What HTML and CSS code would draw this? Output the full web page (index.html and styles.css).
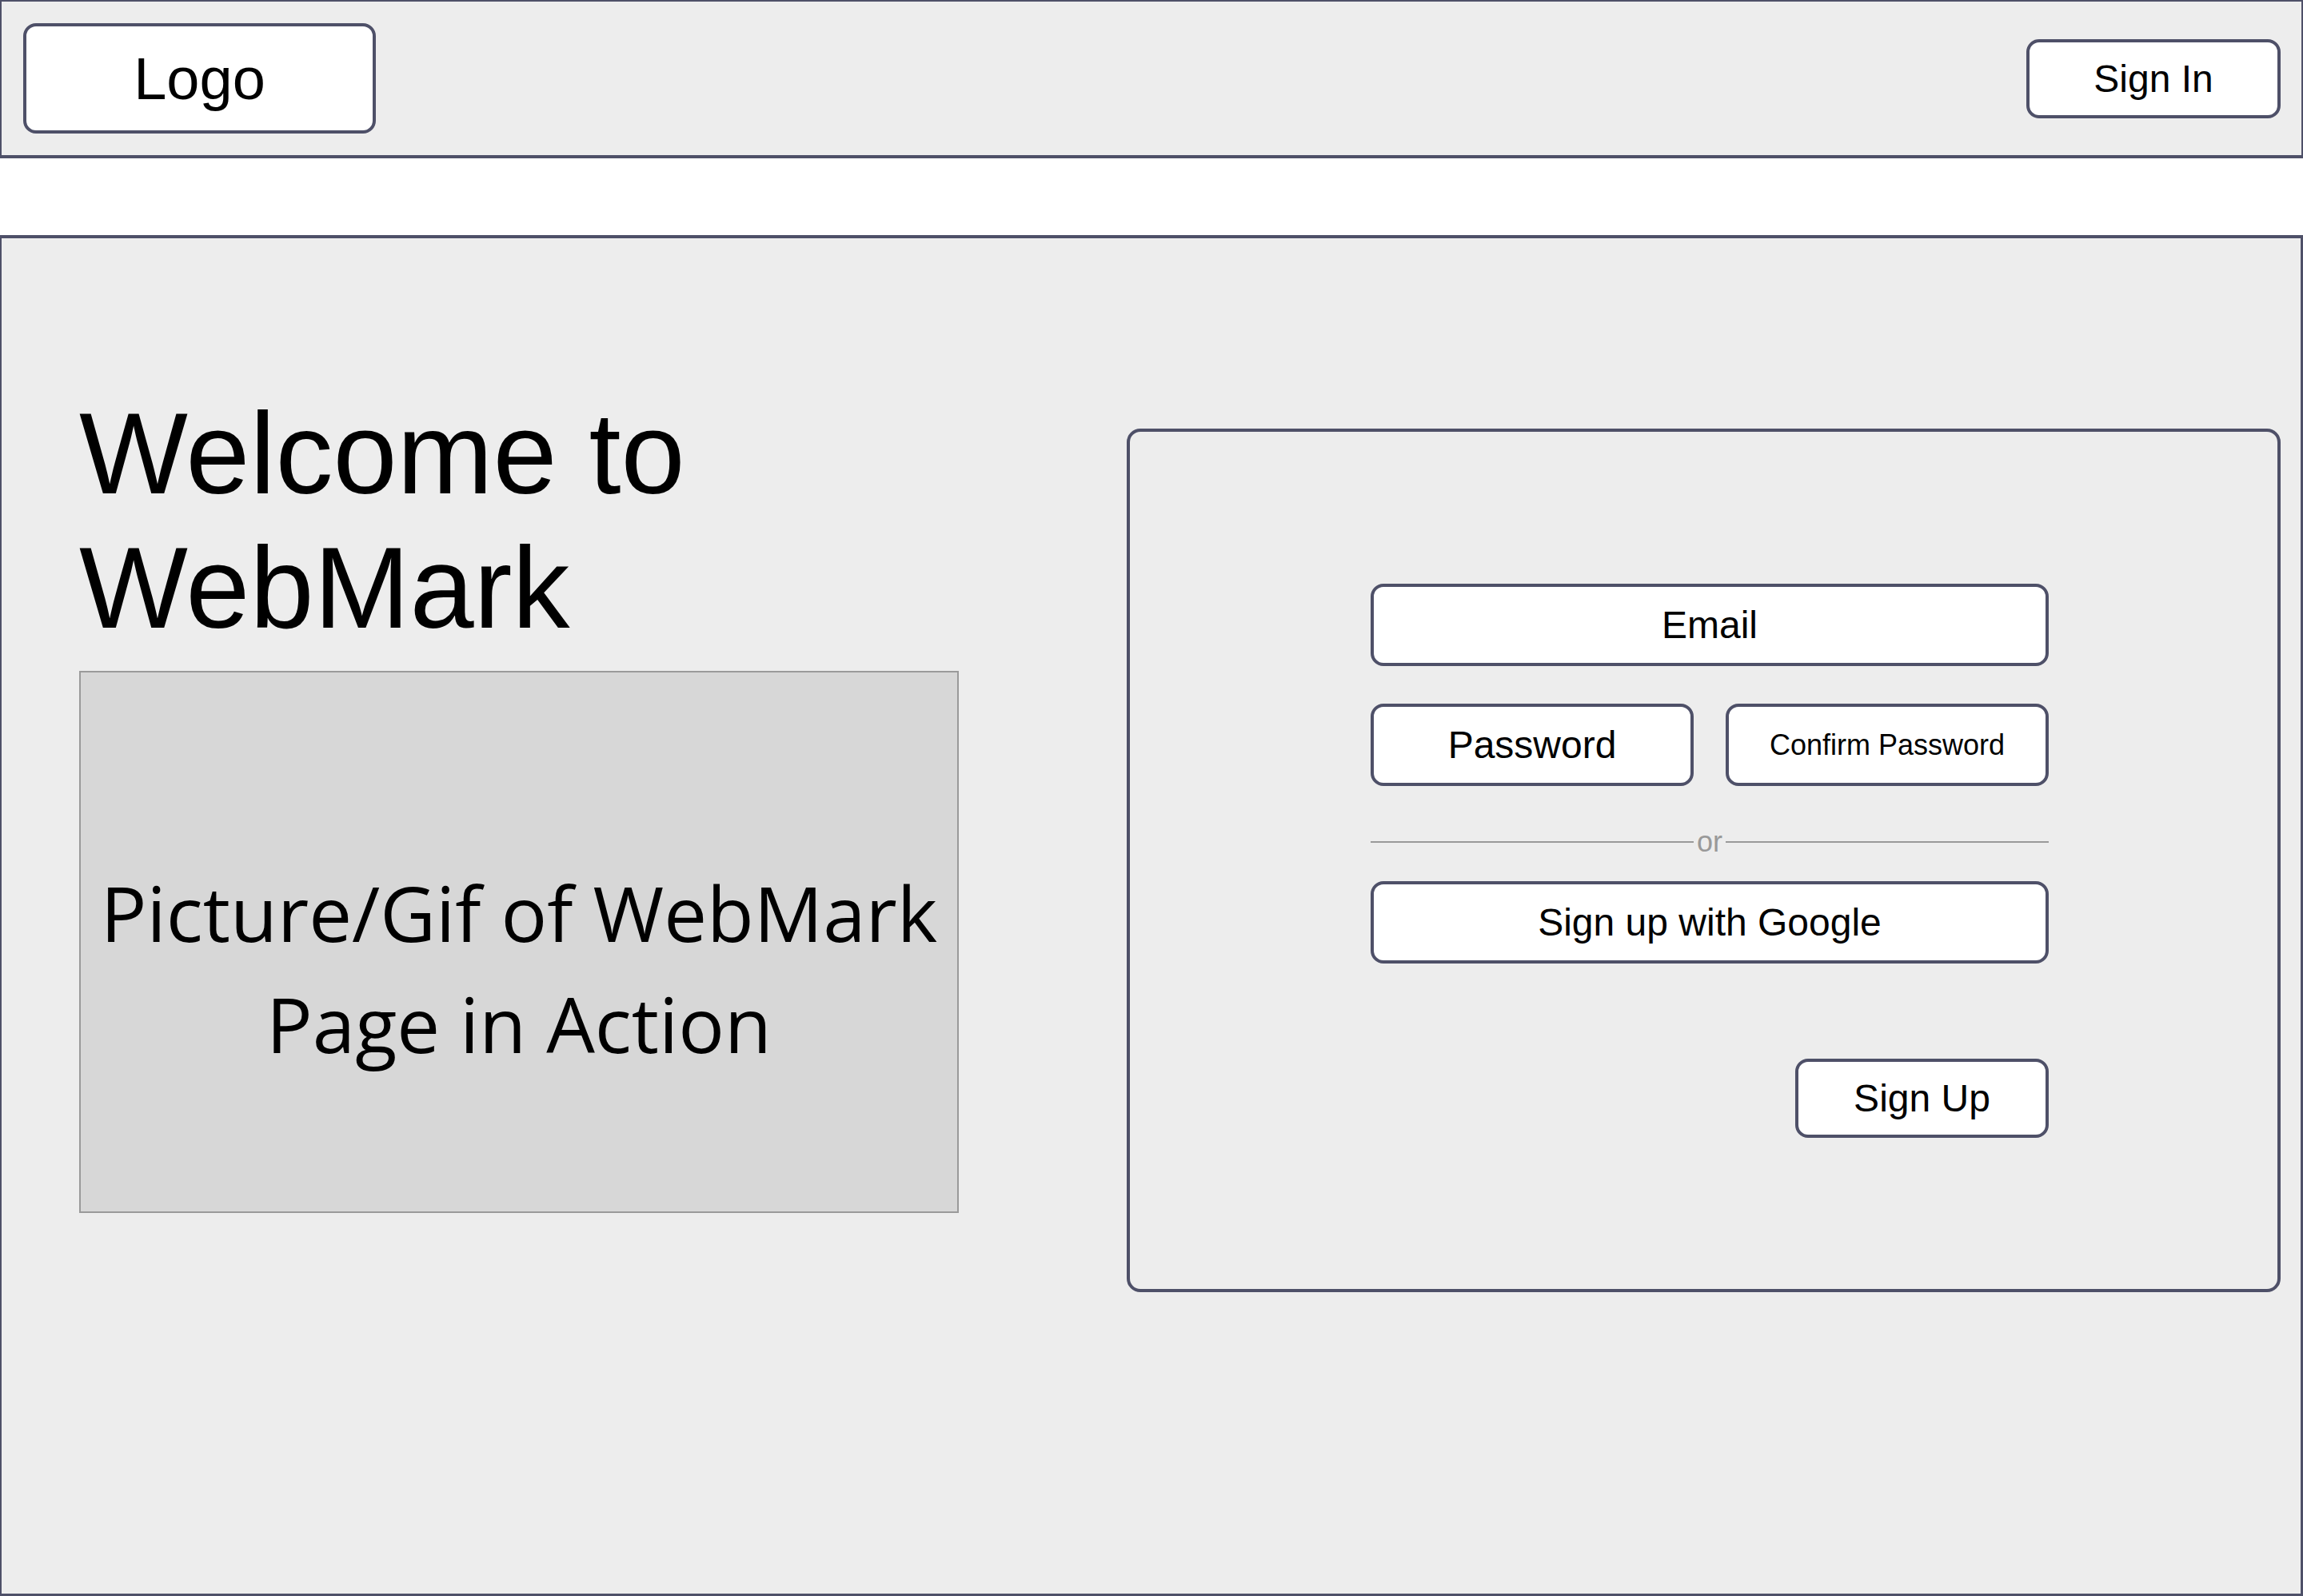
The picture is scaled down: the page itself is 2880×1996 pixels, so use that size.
FILE: index.html
```html
<!DOCTYPE html>
<html lang="en">
<head>
<meta charset="utf-8">
<title>WebMark</title>
<link rel="stylesheet" href="styles.css">
</head>
<body>
<header class="topbar">
  <div class="logo">Logo</div>
  <div class="signin">Sign In</div>
</header>
<main class="hero">
  <section class="intro">
    <h1 class="title">Welcome to<br>WebMark</h1>
    <div class="media"><p class="media-text">Picture/Gif of WebMark<br>Page in Action</p></div>
  </section>
  <section class="card">
    <div class="form">
      <div class="field">Email</div>
      <div class="pair">
        <div class="field">Password</div>
        <div class="field field-small">Confirm Password</div>
      </div>
      <div class="divider"><span class="rule"></span><span class="or">or</span><span class="rule"></span></div>
      <div class="field google">Sign up with Google</div>
      <div class="actions"><div class="btn">Sign Up</div></div>
    </div>
  </section>
</main>
</body>
</html>
```
FILE: styles.css
```css
* { box-sizing: border-box; }

body {
  margin: 0;
  background: #ffffff;
  font-family: "Liberation Sans", Arial, Helvetica, sans-serif;
  color: #000;
}

.topbar {
  height: 198px;
  border-style: solid;
  border-color: #4e5068;
  border-width: 2px 2px 4px 2px;
  background: #ededed;
  display: flex;
  justify-content: space-between;
  align-items: center;
  padding: 0 26px 0 27px;
}

.logo {
  width: 441px;
  height: 138px;
  border: 4px solid #4e5068;
  border-radius: 16px;
  background: #fff;
  display: flex;
  align-items: center;
  justify-content: center;
  font-size: 74px;
}

.signin {
  width: 318px;
  height: 99px;
  border: 4px solid #4e5068;
  border-radius: 16px;
  background: #fff;
  display: flex;
  align-items: center;
  justify-content: center;
  font-size: 48px;
}

.hero {
  margin-top: 96px;
  height: 1702px;
  border-style: solid;
  border-color: #4e5068;
  border-width: 4px 3px 3px 2px;
  background: #ededed;
  display: flex;
  align-items: flex-start;
  padding: 186px 25px 0 97px;
}

.intro {
  width: 1100px;
  flex: none;
}

.title {
  margin: 0;
  font-size: 144px;
  line-height: 168px;
  font-weight: 400;
}

.media {
  margin-top: 19px;
  height: 678px;
  border: 2px solid #9a9a9a;
  background: #d7d7d7;
  display: flex;
  align-items: center;
  justify-content: center;
  padding-top: 63px;
}

.media-text {
  margin: 0;
  font-family: "Open Sans", "Noto Sans", sans-serif;
  font-size: 96px;
  line-height: 139px;
  text-align: center;
}

.card {
  flex: none;
  margin-left: 210px;
  margin-top: 52px;
  width: 1443px;
  height: 1080px;
  border: 4px solid #4e5068;
  border-radius: 17px;
  padding: 190px 0 0 301px;
}

.form {
  width: 848px;
}

.field {
  height: 103px;
  border: 4px solid #4e5068;
  border-radius: 16px;
  background: #fff;
  display: flex;
  align-items: center;
  justify-content: center;
  font-size: 48px;
}

.field-small {
  font-size: 36px;
}

.pair {
  margin-top: 47px;
  display: grid;
  grid-template-columns: 404px 404px;
  column-gap: 40px;
}

.divider {
  margin-top: 50px;
  height: 40px;
  display: flex;
  align-items: center;
  gap: 4px;
}

.rule {
  flex: 1;
  height: 2px;
  background: #9a9a9a;
}

.or {
  color: #999;
  font-size: 36px;
  line-height: 40px;
}

.google {
  margin-top: 29px;
}

.actions {
  margin-top: 119px;
  display: flex;
  justify-content: flex-end;
}

.btn {
  width: 317px;
  height: 99px;
  border: 4px solid #4e5068;
  border-radius: 16px;
  background: #fff;
  display: flex;
  align-items: center;
  justify-content: center;
  font-size: 48px;
}
```
